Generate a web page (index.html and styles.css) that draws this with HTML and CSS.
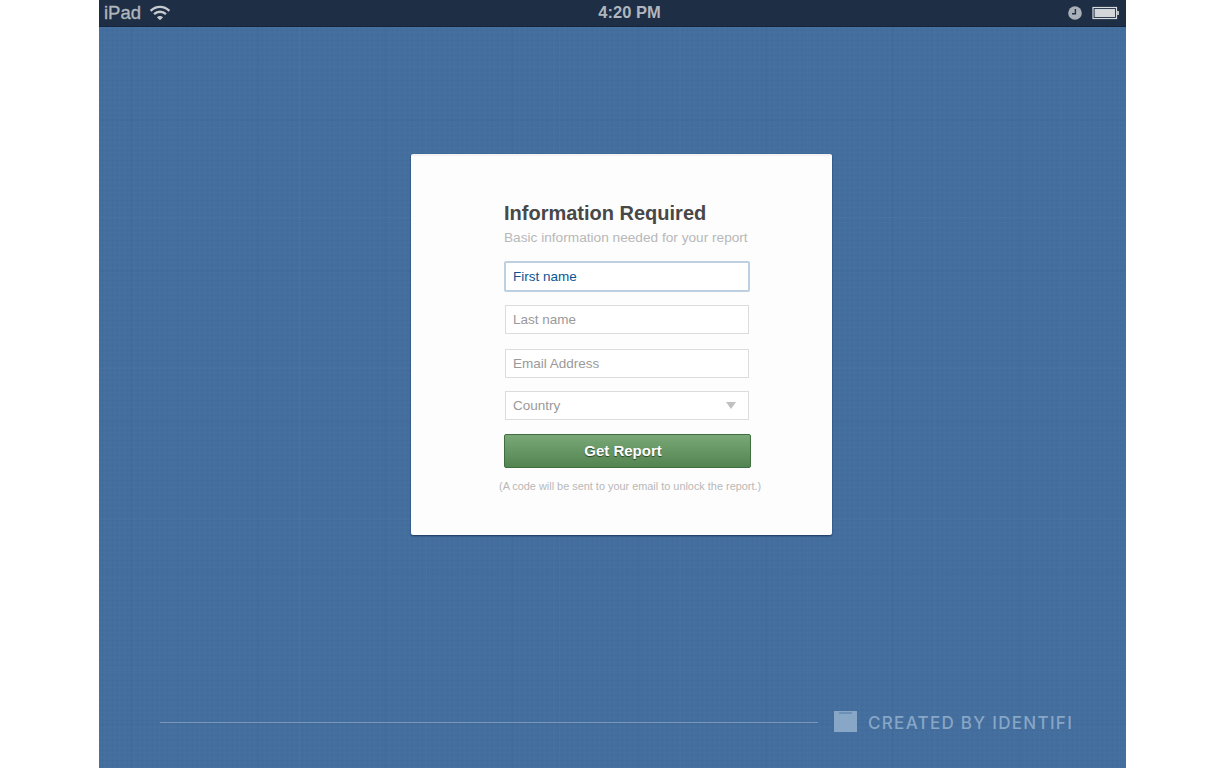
FILE: index.html
```html
<!DOCTYPE html>
<html lang="en">
<head>
<meta charset="utf-8">
<title>Information Required</title>
<link rel="stylesheet" href="styles.css">
</head>
<body>
<div class="device">
  <header class="status">
    <div class="status-left">
      <span class="carrier">iPad</span>
      <svg class="wifi" width="22" height="17" viewBox="0 0 20 16"><path d="M1.2 6.4C6.2 1.5 13.8 1.5 18.8 6.4" fill="none" stroke="#c6cbd0" stroke-width="2.3"/><path d="M4.4 9.6C7.6 6.6 12.4 6.6 15.6 9.6" fill="none" stroke="#c6cbd0" stroke-width="2.3"/><path d="M7.1 12.4 10 15.4 12.9 12.4C11.2 10.9 8.8 10.9 7.1 12.4Z" fill="#c6cbd0"/></svg>
    </div>
    <div class="time">4:20 PM</div>
    <div class="status-right">
      <svg class="clock" width="14" height="14" viewBox="0 0 14 14"><circle cx="7" cy="7" r="6.8" fill="#a9b0b8"/><path d="M7.4 3V7.8H4" fill="none" stroke="#1f3049" stroke-width="1.4"/></svg>
      <svg class="battery" width="28" height="14" viewBox="0 0 28 14"><rect x="1" y="1.5" width="23.5" height="11" fill="none" stroke="#d8dbde" stroke-width="1.2"/><rect x="2.6" y="3" width="20.4" height="8" fill="#d3d6d9"/><rect x="25" y="5" width="2" height="4" fill="#b9bfc5"/></svg>
    </div>
  </header>
  <main class="stage">
    <section class="card">
      <h1 class="title">Information Required</h1>
      <p class="subtitle">Basic information needed for your report</p>
      <div class="field field-active">First name</div>
      <div class="field">Last name</div>
      <div class="field">Email Address</div>
      <div class="field field-select">Country<span class="arrow"></span></div>
      <button class="submit" type="button">Get Report</button>
      <p class="note">(A code will be sent to your email to unlock the report.)</p>
    </section>
  </main>
  <footer class="credit">
    <span class="rule"></span>
    <span class="logo"><span class="logo-notch"></span></span>
    <span class="credit-text">CREATED BY IDENTIFI</span>
  </footer>
</div>
</body>
</html>
```
FILE: styles.css
```css
* { box-sizing: border-box; }
html, body { margin: 0; padding: 0; background: #fff; }
body { width: 1224px; height: 768px; overflow: hidden; font-family: "Liberation Sans", Arial, sans-serif; }
.device {
  width: 1027px; height: 768px; margin-left: 99px;
  display: flex; flex-direction: column;
  background-color: #436e9e;
  background-image:
    repeating-linear-gradient(90deg, rgba(255,255,255,.012) 0 1px, transparent 1px 3px, rgba(20,50,90,.018) 3px 4px, transparent 4px 5px),
    repeating-linear-gradient(90deg, transparent 0 31px, rgba(20,50,90,.035) 31px 33px, transparent 33px 73px, rgba(255,255,255,.02) 73px 74px, transparent 74px 127px),
    repeating-linear-gradient(0deg, rgba(255,255,255,.012) 0 1px, transparent 1px 2px, rgba(20,50,90,.018) 2px 3px, transparent 3px 5px),
    repeating-linear-gradient(0deg, transparent 0 43px, rgba(20,50,90,.03) 43px 45px, transparent 45px 97px, rgba(255,255,255,.02) 97px 98px, transparent 98px 151px);
}
.status {
  height: 27px; flex: none; padding: 0 6px 1px 5px;
  display: grid; grid-template-columns: 1fr auto 1fr; align-items: center;
  background: #1e2e45;
  border-bottom: 1px solid #15243a;
}
.status-left { display: flex; align-items: center; gap: 8px; }
.carrier { font-size: 18.5px; font-weight: 400; color: #b0b6bd; -webkit-text-stroke: .35px #b0b6bd; }
.wifi { display: block; }
.time { font-size: 16.5px; font-weight: 700; color: #b0b6bd; margin-left: 35px; }
.status-right { display: flex; align-items: center; justify-content: flex-end; gap: 10px; }
.clock, .battery { display: block; }
.stage { flex: 1; padding: 127px 0 0 312px; }
.card {
  width: 421px; height: 381px; padding: 44px 82px 0 93px;
  background: #fdfdfd; border-top: 2px solid #f3f3f3; border-radius: 2px;
  box-shadow: 0 1px 2px rgba(15,35,65,.75);
}
.title { margin: 0; font-size: 20px; line-height: 26px; font-weight: 700; color: #484848; white-space: nowrap; }
.subtitle { margin: 4px 0 0; font-size: 13.67px; line-height: 16px; color: #b8b8b8; white-space: nowrap; }
.field {
  width: 244px; height: 29px; margin: 0 0 15px 1px; padding: 0 7px;
  display: flex; align-items: center; justify-content: space-between;
  background: #fff; border: 1px solid #dcdcdc;
  font-size: 13.5px; color: #9a9a9a;
}
.field-active { width: 246px; height: 31px; margin: 15px 0 13px 0; padding: 0 7px 1px; border: 2px solid #bcd0e2; border-radius: 2px; color: #0b5592; }
.field-select { margin-top: -2px; margin-bottom: 14px; }
.arrow { width: 0; height: 0; margin-right: 5px; border-left: 5.5px solid transparent; border-right: 5.5px solid transparent; border-top: 7px solid #c0c0c0; }
.submit {
  display: block; width: 247px; height: 34px; padding: 0 9px 2px 0;
  background: linear-gradient(#7aa878, #528450);
  border: 1px solid #3f6f3e; border-radius: 2px;
  font: 700 15px "Liberation Sans", Arial, sans-serif; color: #fff;
  text-shadow: 0 1px 1px rgba(0,0,0,.55);
}
.note { margin: 11px 0 0 -5px; font-size: 10.9px; line-height: 14px; color: #b8b8b8; white-space: nowrap; }
.credit { flex: none; height: 46px; padding: 0 0 0 61px; display: flex; align-items: flex-start; }
.rule { flex: none; width: 658px; height: 1px; background: rgba(255,255,255,.28); }
.logo { flex: none; position: relative; width: 23px; height: 21px; margin: -11px 11px 0 16px; background: #88a6c6; }
.logo-notch { position: absolute; left: 5px; top: 1px; width: 13px; height: 2px; background: #6d90b6; }
.credit-text { margin-top: -9px; font: 500 17px/20px "Inter", sans-serif; letter-spacing: 1.3px; color: #88a6c6; white-space: nowrap; }
```
